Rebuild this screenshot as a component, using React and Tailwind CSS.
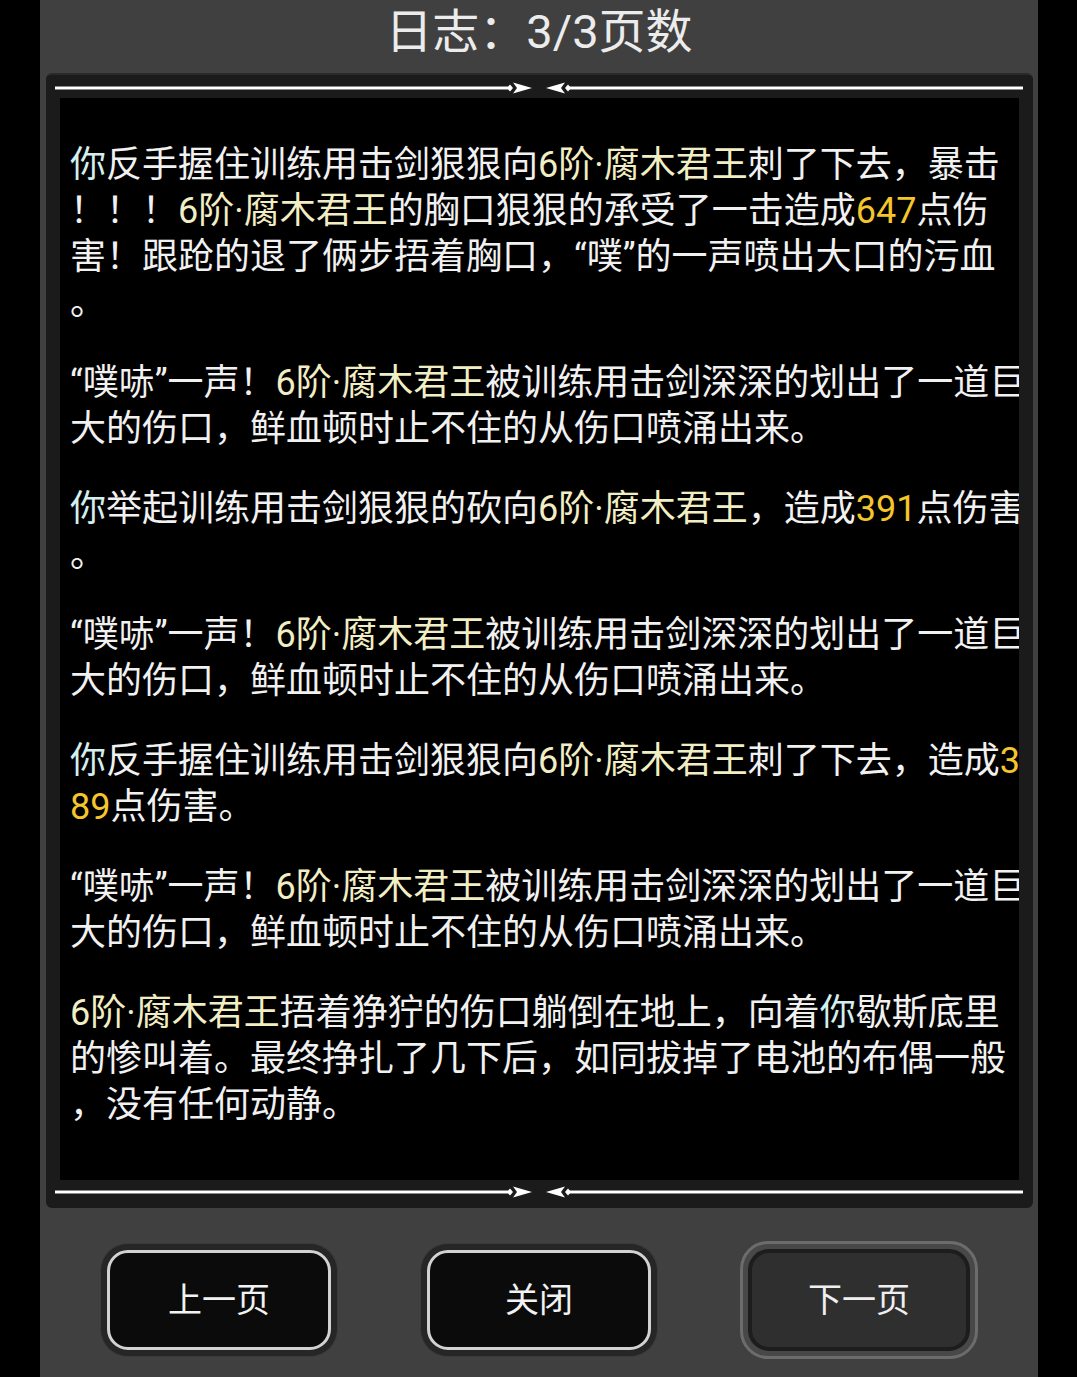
const tone = {
  w: "text-[#f1f1f1]",
  n: "text-[#d3f0ef]",
  m: "text-[#f2eec4]",
  d: "text-[#f5c62c]",
};

const BOSS = ["m", "6阶·腐木君王"];

const slash = [
  [["w", "“噗哧”一声！"], BOSS, ["w", "被训练用击剑深深的划出了一道巨"]],
  [["w", "大的伤口，鲜血顿时止不住的从伤口喷涌出来。"]],
];

const log = [
  [
    [["n", "你"], ["w", "反手握住训练用击剑狠狠向"], BOSS, ["w", "刺了下去，暴击"]],
    [["w", "！！！"], BOSS, ["w", "的胸口狠狠的承受了一击造成"], ["d", "647"], ["w", "点伤"]],
    [["w", "害！跟跄的退了俩步捂着胸口，“噗”的一声喷出大口的污血"]],
    [["w", "。"]],
  ],
  slash,
  [
    [["n", "你"], ["w", "举起训练用击剑狠狠的砍向"], BOSS, ["w", "，造成"], ["d", "391"], ["w", "点伤害"]],
    [["w", "。"]],
  ],
  slash,
  [
    [["n", "你"], ["w", "反手握住训练用击剑狠狠向"], BOSS, ["w", "刺了下去，造成"], ["d", "3"]],
    [["d", "89"], ["w", "点伤害。"]],
  ],
  slash,
  [
    [BOSS, ["w", "捂着狰狞的伤口躺倒在地上，向着"], ["n", "你"], ["w", "歇斯底里"]],
    [["w", "的惨叫着。最终挣扎了几下后，如同拔掉了电池的布偶一般"]],
    [["w", "，没有任何动静。"]],
  ],
];

// ornament rule: two lines meeting at arrow tips in the middle
function Divider() {
  const arrow = (flip) => (
    <g transform={flip ? "translate(968 0) scale(-1 1)" : undefined}>
      <line x1="0" y1="7" x2="456" y2="7" stroke="#8a8a8a" strokeWidth="4" />
      <line x1="0" y1="7" x2="456" y2="7" stroke="#ffffff" strokeWidth="2" />
      <polygon points="452,7 455,3.5 458,7 455,10.5" fill="#ffffff" />
      <polygon points="458,1.5 477,7 458,12.5 462,7" fill="#ffffff" />
    </g>
  );
  return (
    <svg width="968" height="14" viewBox="0 0 968 14" className="block">
      {arrow(false)}
      {arrow(true)}
    </svg>
  );
}

function Button({ label, muted }) {
  if (muted) {
    return (
      <div className="w-[238px] h-[118px] -mt-[2px] rounded-[28px] border-[3px] border-[#6c6c6c] bg-[#484848] p-[5px]">
        <div className="h-full rounded-[21px] border-[4px] border-[#1d1d1d] bg-[#2f2f2f] flex items-center justify-center text-[34px] text-[#efefef]">
          {label}
        </div>
      </div>
    );
  }
  return (
    <div className="w-[238px] h-[114px] rounded-[28px] bg-[#262626] border border-[#3a3a3a] p-[6px]">
      <div className="h-full rounded-[21px] border-[3px] border-[#d2d2d2] bg-[#0b0b0b] flex items-center justify-center text-[34px] text-[#f2f2f2]">
        {label}
      </div>
    </div>
  );
}

export default function App() {
  return (
    <div className="w-[1077px] h-[1377px] bg-black overflow-hidden font-['Roboto','Noto_Sans_CJK_SC',sans-serif]">
      <div className="ml-[40px] w-[998px] h-full bg-[#404040] flex flex-col">
        <div className="h-[73px] flex items-center justify-center text-[47px] text-[#ececec] pb-[8px]">
          日志：3/3页数
        </div>

        <div className="ml-[6px] w-[987px] rounded-[6px] bg-[#1b1b1b] border-t-2 border-[#2a2a2a] flex flex-col">
          <div className="pl-[9px] pt-[6px] pb-[3px]">
            <Divider />
          </div>
          <div className="mx-[14px] h-[1082px] bg-black pl-[10px] pt-[44px] overflow-hidden">
            {log.map((para, i) => (
              <div key={i} className={i > 0 ? "mt-[34px]" : ""}>
                {para.map((line, j) => (
                  <div key={j} className="h-[46px] leading-[46px] text-[36px] whitespace-nowrap">
                    {line.map(([t, text], k) => (
                      <span key={k} className={tone[t]}>
                        {text}
                      </span>
                    ))}
                  </div>
                ))}
              </div>
            ))}
          </div>
          <div className="pl-[9px] pt-[5px] pb-[9px]">
            <Divider />
          </div>
        </div>

        <div className="mt-[35px] flex items-start justify-center gap-[82px]">
          <Button label="上一页" />
          <Button label="关闭" />
          <Button label="下一页" muted />
        </div>
      </div>
    </div>
  );
}
